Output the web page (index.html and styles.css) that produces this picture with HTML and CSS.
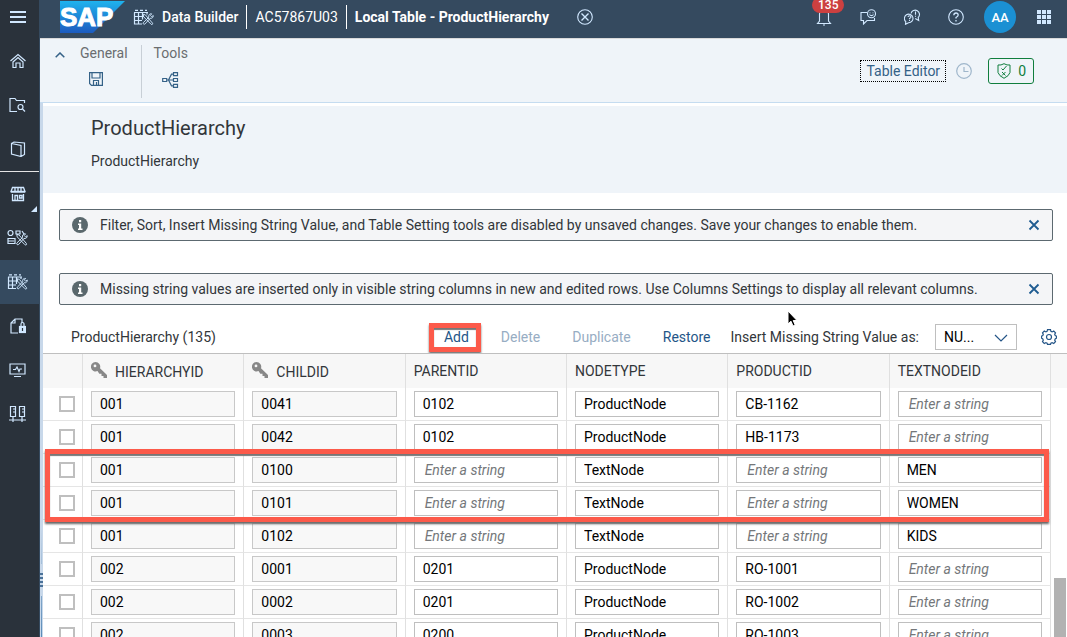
FILE: index.html
```html
<!DOCTYPE html>
<html lang="en">
<head>
<meta charset="utf-8">
<title>Data Builder - ProductHierarchy</title>
<link rel="stylesheet" href="styles.css">
</head>
<body>
<svg class="symbols" aria-hidden="true">
  <symbol id="key" viewBox="0 0 16 16"><path fill="currentColor" fill-rule="evenodd" d="M4.500 0a4.800 4.800 0 0 1 4.500 6.300l7 6.700v3h-3.500v-2h-2v-2.200H8.300L6.500 9A4.700 4.700 0 1 1 4.500 0zM4 2.500a1.400 1.400 0 1 0 0 2.800 1.400 1.400 0 0 0 0-2.800z"/></symbol>
  <symbol id="close" viewBox="0 0 12 12"><path d="M1.500 1.500l9 9M10.500 1.500l-9 9" stroke="currentColor" stroke-width="1.800"/></symbol>
  <symbol id="info" viewBox="0 0 16 16"><circle cx="8" cy="8" r="8" fill="currentColor"/><path d="M7 3h2.200v2.200H7zM6 6.500h3.200v5H10.500v1.500H6v-1.500h1V8H6z" fill="#fff"/></symbol>
  <symbol id="tools" viewBox="0 0 12 12"><path d="M1.200 1.200l2 .6 6.800 7.800c.8 1-.4 2-1.300 1.200L1.600 3.600zM10.800 2.400A2.300 2.300 0 0 1 7.800 5L2.900 10.500C2 11.500.5 10.200 1.300 9.200L6.600 4A2.300 2.300 0 0 1 9.300.8L8 2.300l1.300 1.300z" fill="none" stroke="currentColor" stroke-width=".9"/></symbol>
  <symbol id="databuilder" viewBox="0 0 22 16"><path d="M1 3h14M1 7h10M1 11h8M1 14.500h8M1.500 3v12M5.500 3v12M9.500 3v7M14 3v2M2 .8h3M7 .8h3M12 .8h2" fill="none" stroke="currentColor" stroke-width="1.200"/><svg x="9" y="3.500" width="12.500" height="12.500"><use href="#tools"/></svg></symbol>
</svg>
<div class="app">
  <nav class="side" aria-label="Main">
    <button class="side-menu" aria-label="Menu"><svg width="16" height="12" viewBox="0 0 16 12"><path d="M0 1h16M0 6h16M0 11h16" stroke="currentColor" stroke-width="2"/></svg></button>
    <a href="#" class="side-item" aria-label="Home"><svg width="16" height="16" viewBox="0 0 16 16"><path d="M.5 8L8 1.500 15.500 8M3 9l5-4.500L13 9v5.500H10V10H6v4.500H3z"/></svg></a>
    <a href="#" class="side-item" aria-label="Repository"><svg width="17" height="16" viewBox="0 0 17 16"><path d="M8 14.500H1V1.500h5l1.500 2H15.500V6"/><circle cx="11.500" cy="10" r="2.500"/><path d="M13.500 12l2.500 2.500"/></svg></a>
    <a href="#" class="side-item" aria-label="Catalog"><svg width="16" height="16" viewBox="0 0 16 16"><path d="M1.500 2.500L11 4.500v11L1.500 13zM1.500 2.500L4 1l10.500 1v11.500L11 15.500M11 4.500V15"/></svg></a>
    <a href="#" class="side-item side-split" aria-label="Data Marketplace"><svg width="16" height="16" viewBox="0 0 16 16"><path d="M2.500 1.500h11l1.500 4H1zM1 6h14M5 1.500v4M8 1.500v4M11 1.500v4M2.500 8v6.500h11V8M5 14V9.500h2.500V14M9.500 9.500H12V12H9.500z" stroke-width="1.300"/></svg><i class="corner"></i></a>
    <a href="#" class="side-item" aria-label="Business Builder"><svg width="22" height="18" viewBox="0 0 22 18"><circle cx="3.500" cy="4" r="2.500"/><path d="M9 2h4v3H9zM1 9.500h7v5H1zM1 12h6M15 2l2 3"/><svg x="8.500" y="4" width="13" height="13"><use href="#tools"/></svg></svg></a>
    <a href="#" class="side-item active" aria-label="Data Builder" aria-current="page"><svg width="22" height="16"><use href="#databuilder"/></svg></a>
    <a href="#" class="side-item" aria-label="Data Access Controls"><svg width="16" height="16" viewBox="0 0 16 16"><path d="M8 15H1V5l4-4h7v4M5 1v4H1" /><rect x="9.500" y="8.500" width="6" height="6" fill="currentColor"/><path d="M11 8V6a1.500 1.500 0 0 1 3 0v2"/><path d="M12.500 10v3" stroke="#2a323b"/></svg></a>
    <a href="#" class="side-item" aria-label="Data Integration Monitor"><svg width="17" height="16" viewBox="0 0 17 16"><path d="M1 2h15v10H1zM5 14.500h7M4 7.500h2.500L8 5l2 4.500L11 7h2"/></svg></a>
    <a href="#" class="side-item" aria-label="Connections"><svg width="17" height="18" viewBox="0 0 17 18"><path d="M1.500 1.500h5v10h-5zM10.500 1.500h5v10h-5zM4 12v5M13 12v5M0 15h17M4 4h2M13 4h2M4 7h2M13 7h2"/></svg></a>
  </nav>

  <div class="main">
    <header class="shell">
      <svg class="logo" width="65" height="32" viewBox="0 0 65 32" role="img" aria-label="SAP">
        <defs><linearGradient id="sap" x1="0" y1="0" x2="0" y2="1"><stop offset="0" stop-color="#1fb3ee"/><stop offset="1" stop-color="#1d5bbf"/></linearGradient></defs>
        <path d="M0 0h65L33 32H0z" fill="url(#sap)"/>
        <text class="logo-text" x="0" y="25">SAP</text>
      </svg>
      <svg class="shell-app" width="22" height="17"><use href="#databuilder"/></svg>
      <a href="#" class="crumb strong">Data Builder</a>
      <a href="#" class="crumb">AC57867U03</a>
      <span class="crumb bold">Local Table - ProductHierarchy</span>
      <button class="shell-btn" aria-label="Close"><svg width="16" height="16" viewBox="0 0 16 16"><circle cx="8" cy="8" r="7.300"/><path d="M4.500 4.500l7 7M11.500 4.500l-7 7" stroke-width="1.400"/></svg></button>
      <div class="shell-actions">
        <button class="shell-btn bell" aria-label="Notifications"><svg width="16" height="18" viewBox="0 0 16 18"><path d="M3.500 13V6a4.500 4.500 0 0 1 9 0v7l2 2.500H1.500zM7 17h2"/></svg><span class="badge">135</span></button>
        <button class="shell-btn" aria-label="Feedback"><svg width="16" height="16" viewBox="0 0 16 16"><path d="M7 3.500H1v8h2.500V15L7 11.500h7.500V9"/><circle cx="11.500" cy="4.800" r="4"/><path d="M9.500 5.500q2 2.300 4 0M10 3.500v.8M13 3.500v.8"/></svg></button>
        <button class="shell-btn" aria-label="Help centre"><svg width="17" height="16" viewBox="0 0 17 16"><path d="M1.500 15.300l.3-2.600A4.300 4.300 0 1 1 4.500 13.800zM7 4.500A4.300 4.300 0 1 1 14.200 8.500l.5 3-3.500-2M4 8q.2-1.300 1.500-1.300T7 8q0 .7-1.500 1.500v.8M5.500 11v1M11.500 2.500v3.200M11.500 6.700v1"/></svg></button>
        <button class="shell-btn" aria-label="Help"><svg width="16" height="16" viewBox="0 0 16 16"><circle cx="8" cy="8" r="7.300"/><path d="M5.800 6.200Q6 4 8 4t2.200 2Q10.200 7.200 8 8.500v1M8 11v1.500" stroke-width="1.300"/></svg></button>
        <button class="avatar">AA</button>
        <button class="shell-btn" aria-label="Products"><svg width="14" height="14" viewBox="0 0 14 14"><path d="M2 0v14M7 0v14M12 0v14" stroke-width="4" stroke-dasharray="4 1"/></svg></button>
      </div>
    </header>

    <section class="ribbon">
      <button class="ribbon-toggle" aria-label="Collapse"><svg width="10" height="6" viewBox="0 0 10 6"><path d="M.7 5.300L5 1l4.300 4.300" stroke-width="1.500"/></svg></button>
      <div class="group"><span>General</span><button aria-label="Save"><svg width="14" height="14" viewBox="0 0 14 14"><path d="M.6.6h12.800v12.800H2.500L.6 11.500zM3 1v5h8V1M4.500 13V8.500h5V13M7.500 10v3"/></svg></button></div>
      <div class="group tools"><span>Tools</span><button aria-label="Impact and lineage"><svg width="17" height="16" viewBox="0 0 17 16"><path d="M.7 6.500h4v3h-4zM11.500.7h4v3h-4zM11.500 6.500h4v3h-4zM11.500 12.300h4v3h-4zM5 8h6M11 2.200H9.500L6.500 8l3 5.800H11"/></svg></button></div>
      <div class="ribbon-end">
        <button class="editor">Table Editor</button>
        <svg class="clock" width="16" height="16" viewBox="0 0 16 16"><circle cx="8" cy="8" r="7.300"/><path d="M8 4v4.500h4.500"/></svg>
        <button class="valid" aria-label="0 validation messages"><svg width="14" height="16" viewBox="0 0 14 16"><path d="M7 .7q3 1.800 6 1.300v7.500q-1 3.500-6 5.800-5-2.300-6-5.800V2Q4 2.500 7 .7zM4.500 5.500L6 7l3.500-4M5 9l3.500 3.500M8.500 9L5 12.500"/></svg>0</button>
      </div>
    </section>

    <div class="body">
      <div class="splitter"><svg class="grip" width="3" height="110" viewBox="0 0 3 110"><defs><linearGradient id="fade" x1="0" y1="0" x2="0" y2="1"><stop offset="0" stop-color="#c8d8ea"/><stop offset="1" stop-color="#5a8bb8"/></linearGradient></defs><path d="M1 0h1v37H1zM1 69h1v41H1z" fill="url(#fade)"/><path d="M0 46h3v2H0zM0 50h3v2H0zM0 54h3v2H0zM0 58h3v2H0z" fill="#4a7299"/></svg></div>
      <main class="content">
        <header class="title"><h1>ProductHierarchy</h1><p>ProductHierarchy</p></header>
        <div class="messages">
          <div class="msg"><svg class="msg-icon" width="16" height="16"><use href="#info"/></svg><span>Filter, Sort, Insert Missing String Value, and Table Setting tools are disabled by unsaved changes. Save your changes to enable them.</span><button aria-label="Close message"><svg width="12" height="12"><use href="#close"/></svg></button></div>
          <div class="msg"><svg class="msg-icon" width="16" height="16"><use href="#info"/></svg><span>Missing string values are inserted only in visible string columns in new and edited rows. Use Columns Settings to display all relevant columns.</span><button aria-label="Close message"><svg width="12" height="12"><use href="#close"/></svg></button></div>
        </div>
        <div class="toolbar">
          <h2>ProductHierarchy (135)</h2>
          <button class="add">Add<i class="mark-add"></i></button>
          <button disabled>Delete</button>
          <button disabled>Duplicate</button>
          <button class="restore">Restore</button>
          <label for="missing">Insert Missing String Value as:</label>
          <span class="select"><select id="missing"><option>NU...</option></select><svg width="14" height="9" viewBox="0 0 14 9"><path d="M1 1l6 6 6-6"/></svg></span>
          <button class="gear" aria-label="Table settings"><svg width="16" height="16" viewBox="0 0 16 16"><path d="M6.500.7h3l.4 1.700 1.200.5 1.600-.9 1.800 1.900-.8 1.500.5 1.200 1.300.5v2l-1.300.8-.5 1.200.8 1.500-1.800 1.900-1.600-.9-1.200.5-.4 1.300h-3l-.4-1.300-1.200-.5-1.600.9-1.800-1.900.8-1.500-.5-1.200L.5 9.100v-2l1.300-.5.5-1.200-.8-1.500L3.300 2l1.600.9 1.200-.5z"/><circle cx="8" cy="8" r="2.500"/></svg></button>
        </div>
        <div class="grid-wrap">
          <table>
            <colgroup><col class="c-check"><col span="6"><col class="c-scroll"></colgroup>
            <thead><tr><th></th>
              <th><svg class="key" width="16" height="16"><use href="#key"/></svg>HIERARCHYID</th>
              <th><svg class="key" width="16" height="16"><use href="#key"/></svg>CHILDID</th>
              <th>PARENTID</th><th>NODETYPE</th><th>PRODUCTID</th><th>TEXTNODEID</th><th></th></tr></thead>
            <tbody>
              <tr><td><input type="checkbox" aria-label="Select row"></td><td><input readonly aria-label="HIERARCHYID" value="001"></td><td><input readonly aria-label="CHILDID" value="0041"></td><td><input aria-label="PARENTID" value="0102"></td><td><input aria-label="NODETYPE" value="ProductNode"></td><td><input aria-label="PRODUCTID" value="CB-1162"></td><td><input aria-label="TEXTNODEID" placeholder="Enter a string"></td><td></td></tr>
              <tr><td><input type="checkbox" aria-label="Select row"></td><td><input readonly aria-label="HIERARCHYID" value="001"></td><td><input readonly aria-label="CHILDID" value="0042"></td><td><input aria-label="PARENTID" value="0102"></td><td><input aria-label="NODETYPE" value="ProductNode"></td><td><input aria-label="PRODUCTID" value="HB-1173"></td><td><input aria-label="TEXTNODEID" placeholder="Enter a string"></td><td></td></tr>
              <tr><td><input type="checkbox" aria-label="Select row"></td><td><input readonly aria-label="HIERARCHYID" value="001"></td><td><input readonly aria-label="CHILDID" value="0100"></td><td><input aria-label="PARENTID" placeholder="Enter a string"></td><td><input aria-label="NODETYPE" value="TextNode"></td><td><input aria-label="PRODUCTID" placeholder="Enter a string"></td><td><input aria-label="TEXTNODEID" value="MEN"></td><td></td></tr>
              <tr><td><input type="checkbox" aria-label="Select row"></td><td><input readonly aria-label="HIERARCHYID" value="001"></td><td><input readonly aria-label="CHILDID" value="0101"></td><td><input aria-label="PARENTID" placeholder="Enter a string"></td><td><input aria-label="NODETYPE" value="TextNode"></td><td><input aria-label="PRODUCTID" placeholder="Enter a string"></td><td><input aria-label="TEXTNODEID" value="WOMEN"></td><td></td></tr>
              <tr><td><input type="checkbox" aria-label="Select row"></td><td><input readonly aria-label="HIERARCHYID" value="001"></td><td><input readonly aria-label="CHILDID" value="0102"></td><td><input aria-label="PARENTID" placeholder="Enter a string"></td><td><input aria-label="NODETYPE" value="TextNode"></td><td><input aria-label="PRODUCTID" placeholder="Enter a string"></td><td><input aria-label="TEXTNODEID" value="KIDS"></td><td></td></tr>
              <tr><td><input type="checkbox" aria-label="Select row"></td><td><input readonly aria-label="HIERARCHYID" value="002"></td><td><input readonly aria-label="CHILDID" value="0001"></td><td><input aria-label="PARENTID" value="0201"></td><td><input aria-label="NODETYPE" value="ProductNode"></td><td><input aria-label="PRODUCTID" value="RO-1001"></td><td><input aria-label="TEXTNODEID" placeholder="Enter a string"></td><td></td></tr>
              <tr><td><input type="checkbox" aria-label="Select row"></td><td><input readonly aria-label="HIERARCHYID" value="002"></td><td><input readonly aria-label="CHILDID" value="0002"></td><td><input aria-label="PARENTID" value="0201"></td><td><input aria-label="NODETYPE" value="ProductNode"></td><td><input aria-label="PRODUCTID" value="RO-1002"></td><td><input aria-label="TEXTNODEID" placeholder="Enter a string"></td><td></td></tr>
              <tr><td><input type="checkbox" aria-label="Select row"></td><td><input readonly aria-label="HIERARCHYID" value="002"></td><td><input readonly aria-label="CHILDID" value="0003"></td><td><input aria-label="PARENTID" value="0200"></td><td><input aria-label="NODETYPE" value="ProductNode"></td><td><input aria-label="PRODUCTID" value="RO-1003"></td><td><input aria-label="TEXTNODEID" placeholder="Enter a string"></td><td></td></tr>
            </tbody>
          </table>
          <i class="mark-rows"></i>
          <i class="thumb"></i>
        </div>
      </main>
    </div>
  </div>
</div>
<svg class="cursor" width="12" height="18" viewBox="0 0 12 18"><path d="M1 1v13l3-2.800L6 16l2.200-1-2-4.500H10z" fill="#000" stroke="#fff" stroke-width="1"/></svg>
</body>
</html>
```
FILE: styles.css
```css
* { box-sizing: border-box; }
body { margin: 0; overflow: hidden; font-family: Roboto, "Liberation Sans", sans-serif; font-size: 14px; color: #32363a; background: #fff; }
button { font: inherit; color: inherit; background: none; border: 0; padding: 0; }
h1, h2, p { margin: 0; font-weight: 400; }
svg { display: block; flex: none; }
.symbols { position: absolute; width: 0; height: 0; }
.app { display: flex; height: 100vh; overflow: hidden; }

.side { width: 40px; flex: none; display: flex; flex-direction: column; background: #2a323b; border-right: 1px solid #354a5f; color: #d1e8ff; }
.side-menu { height: 34px; margin-bottom: 5px; flex: none; display: flex; align-items: center; padding-left: 10px; }
.side-item { position: relative; height: 44px; flex: none; display: flex; align-items: center; justify-content: center; color: #d1e8ff; padding-right: 4px; }
.side-item svg { fill: none; stroke: currentColor; stroke-width: 1.2; }
.side-split { border-top: 1px solid #e5e5e5; height: 45px; }
.active { background: #354a5f; }
.corner { position: absolute; right: 2px; bottom: 4px; border-left: 6px solid transparent; border-bottom: 6px solid #d1e8ff; }

.main { flex: 1; min-width: 0; display: flex; flex-direction: column; }
.shell { height: 38px; flex: none; display: flex; align-items: center; background: #354a5f; color: #fff; padding: 0 1px 4px 20px; }
.logo-text { font: 700 26px "Liberation Sans", sans-serif; fill: #fff; stroke: #fff; stroke-width: 1; }
.shell-app { margin: 0 7px 0 8px; color: #d1e8ff; }
.crumb { color: #fff; text-decoration: none; line-height: 24px; padding: 0 8px; border-left: 1px solid #fff; white-space: nowrap; }
.strong { font-weight: 500; border: 0; }
.bold { font-weight: 700; padding-right: 14px; }
.shell-btn { position: relative; width: 44px; display: flex; justify-content: center; color: #d1e8ff; }
.shell-btn svg { fill: none; stroke: currentColor; stroke-width: 1.1; }
.shell-app + .crumb { padding-left: 0; }
.shell-actions { margin-left: auto; display: flex; align-items: center; }
.avatar { width: 32px; height: 32px; margin: 0 6px; border-radius: 50%; background: #1b90d3; color: #fff; font-size: 13px; font-weight: 500; }
.badge { position: absolute; left: 10px; top: -11px; padding: 0 6px; border-radius: 8px; background: #cc4040; color: #fff; font-size: 12px; line-height: 16px; font-weight: 500; }

.ribbon { height: 65px; flex: none; display: flex; background: #eff4f9; border-top: 1px solid #d9d9d9; border-bottom: 1px solid #c5dcf0; color: #6a6d70; padding: 6px 33px 4px 15px; }
.ribbon svg { fill: none; stroke: #346187; stroke-width: 1.2; }
.ribbon-toggle { align-self: flex-start; margin: 7px 15px 0 0; }
.group { display: flex; flex-direction: column; gap: 11px; line-height: 16px; padding-right: 13px; border-right: 1px solid #c8cfd6; }
.group button { align-self: flex-start; margin-left: 9px; }
.tools { border: 0; padding-left: 12px; }
.tools button { margin-left: 8px; }
.ribbon-end { margin-left: auto; display: flex; align-items: center; gap: 10px; padding-bottom: 1px; }
.editor { height: 22px; padding: 0 5px; border: 1px dotted #000; color: #346187; }
.ribbon .clock { stroke: #9fb6cb; }
.valid { display: flex; align-items: center; gap: 7px; margin-left: 6px; height: 26px; padding: 0 7px 0 8px; border: 1px solid #107e3e; border-radius: 3px; color: #107e3e; }
.ribbon .valid svg { stroke: #107e3e; stroke-width: 1; }

.body { flex: 1; min-height: 0; display: flex; }
.splitter { position: relative; width: 3px; flex: none; background: #c8d8ea; }
.grip { position: absolute; left: 0; bottom: 0; }
.content { flex: 1; min-width: 0; padding-top: 3px; display: flex; flex-direction: column; }
.title { background: #eff4f9; padding: 10px 48px 22px; }
.title h1 { font-size: 20px; line-height: 24px; }
.title p { line-height: 20px; margin-top: 11px; }
.messages { padding: 16px 14px 0 16px; display: grid; gap: 32px; }
.msg { display: flex; align-items: center; height: 32px; padding: 0 12px; gap: 12px; border: 1px solid #5c6970; border-radius: 2px; background: #f4f5f7; white-space: nowrap; }
.msg-icon { color: #5a686d; }
.msg button { margin-left: auto; color: #1f5c91; }

.toolbar { height: 48px; display: flex; align-items: center; padding: 16px 10px 0 28px; white-space: nowrap; color: #245587; }
.toolbar h2 { font-size: 14px; flex: 1; color: #32363a; }
.toolbar button { height: 26px; margin-right: 32px; }
.toolbar button:disabled { color: #97adc3; }
.toolbar .add { position: relative; }
.mark-add { position: absolute; left: -15px; right: -12px; top: -1px; bottom: -2px; border: 5px solid #fc5a4a; box-shadow: 0 2px 2px #777, inset 0 2px 1px #777; }
.toolbar label { color: #32363a; }
.toolbar .restore { margin-right: 20px; }
.select { position: relative; margin-left: 16px; width: 82px; }
.select select { display: block; width: 100%; height: 26px; appearance: none; padding: 0 8px; border: 1px solid #bfbfbf; border-radius: 0; background: #fff; font: inherit; color: #000; }
.select svg { position: absolute; right: 9px; top: 10px; }
.toolbar svg { fill: none; stroke: #245587; stroke-width: 1.2; }
.toolbar .gear { margin: 0 0 0 24px; }

.grid-wrap { position: relative; flex: 1; min-height: 0; overflow: hidden; border-top: 1px solid #bfbfbf; }
table { width: 100%; table-layout: fixed; border-collapse: separate; border-spacing: 0; }
.c-check { width: 40px; }
.c-scroll { width: 16px; }
th { height: 34px; padding: 0 0 0 8px; text-align: left; font-weight: 400; white-space: nowrap; background: #f7f7f7; border-right: 1px solid #e0e0e0; }
th svg { display: inline-block; vertical-align: -1px; margin-right: 8px; color: #888; }
td { height: 33px; padding: 0 8px; border-right: 1px solid #e0e0e0; border-bottom: 1px solid #e5e5e5; }
td:first-child { padding: 0 0 0 16px; }
th:last-child { border: 0; }
td:last-child { border: 0; padding: 0; }
td input { display: block; width: 100%; height: 26px; padding: 0 8px; border: 1px solid #bfbfbf; border-radius: 0; background: #fff; font: inherit; color: #000; }
td input:read-only { background: #f8f8f8; border-color: #c8c8c8; }
td input::placeholder { color: #74777a; font-style: italic; padding-left: 2px; opacity: 1; }
td input[type="checkbox"] { appearance: none; width: 16px; height: 16px; margin: 0; padding: 0; border: 2px solid #bfbfbf; background: #fff; }
.mark-rows { position: absolute; left: 2px; right: 18px; top: 95px; height: 73px; border: 5px solid #fc5a4a; box-shadow: 0 2px 2px #666, inset 0 2px 1px #777; pointer-events: none; }
.thumb { position: absolute; right: 1px; bottom: 0; width: 12px; height: 59px; background: #b2b2b2; }
.cursor { position: absolute; left: 787px; top: 310px; }
```
